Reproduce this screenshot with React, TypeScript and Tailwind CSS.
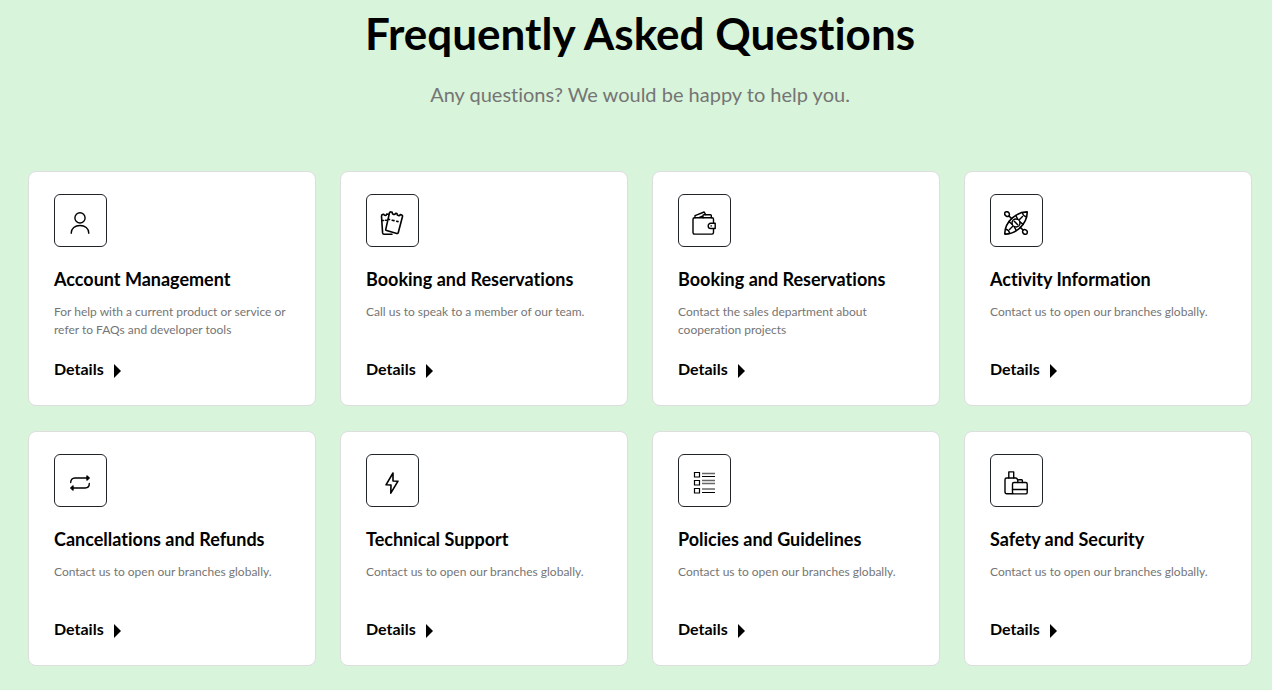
import type { ReactNode } from "react";

type Topic = {
  title: string;
  text: string;
  icon: ReactNode;
};

function Icon({ children }: { children: ReactNode }) {
  return (
    <svg
      viewBox="0 0 24 24"
      className="size-6"
      fill="none"
      stroke="#000"
      strokeWidth="1.4"
      strokeLinecap="round"
      strokeLinejoin="round"
      aria-hidden="true"
    >
      {children}
    </svg>
  );
}

const personIcon = (
  <Icon>
    <circle cx="12" cy="6.9" r="5.1" />
    <path d="M3.2 22.2c0-4.7 3.8-7.7 8.8-7.7s8.8 3 8.8 7.7" />
  </Icon>
);

const ticketsIcon = (
  <Icon>
    <path
      d="M12 23.200H4c-.8 0-1.300-.5-1.400-1.300L1.500 5.300c0-.9.200-1.500.9-1.700l1.400-.3c.6 1.700 2.600 1.500 3-.3l1.700.2"
      strokeWidth="1.600"
    />
    <path d="M1.900 9.500h1.600M5.500 9.300h1" strokeWidth="1.600" />
    <path
      d="M10.800.9l1.400.4c-.3 2.200 2.500 3 3.400 1l1.400.3c-.2 2.200 2.400 2.800 3.500.9l1.200.5c.7.200 1 .8.800 1.500L18.300 21.500c-.2.800-.8 1.100-1.500.9L6.600 19.600c-.7-.2-1-.8-.8-1.500L9.500 1.800c.2-.7.600-1.100 1.300-.9z"
      strokeWidth="1.600"
    />
    <path d="M8.500 8.200l1 .3M12.200 9.200l1.800.4M16.700 10.300l1.300.3" strokeWidth="1.600" />
  </Icon>
);

const walletIcon = (
  <Icon>
    <rect x="1" y="6.800" width="20.500" height="16.300" rx="1.500" />
    <path d="M3 6.800V4.700L12.200 1l1.400 2.600" />
    <path d="M11 6.800V4.500c0-.5.3-.8.8-.8h6.700c.5 0 .8.300.8.800v2.300M7.500 6.500L11 5" />
    <path d="M23.200 12.300h-4.400a2.600 2.600 0 0 0 0 5.200h4.400z" fill="#fff" />
    <path d="M19 14.900h.4" />
  </Icon>
);

const kayakIcon = (
  <Icon>
    <path
      d="M23.200.9C17 .8 12 3.600 8 7.200 4 11 .700 16.300.8 23.100c6.200.1 11.200-2.700 15.200-6.300 4-3.800 7.300-9.100 7.200-15.900z"
      strokeWidth="1.600"
    />
    <circle cx="12" cy="12" r="4" strokeWidth="1.500" />
    <path d="M10.300 10.300l3.400 3.400" strokeWidth="1.500" />
    <path d="M11.800 4.600l1.800 3.300M5 10.600l3.100 2.700M19 13.400l-3.100-2.700M12.200 19.400l-1.800-3.300M18.500 2c.3 1.800 1.700 3.200 3.700 3.700M1.800 18.300c2 .4 3.400 1.900 3.700 3.700M5.500 18.500l3-3M15.500 8.500l3-3" />
    <path d="M5 5l2.800 2.800M16.200 16.200L19 19" strokeWidth="1.600" />
    <path
      d="M1.200 1.200C2.500.400 4.200.8 5 2c.5.900.6 1.900 0 3-1.100.6-2.100.5-3 0C.8 4.200.4 2.500 1.200 1.200zM22.800 22.800c-1.300.8-3 .4-3.800-.8-.5-.9-.6-1.900 0-3 1.100-.6 2.100-.5 3 0 1.200.8 1.600 2.500.8 3.800z"
      strokeWidth="1.500"
    />
  </Icon>
);

const repeatIcon = (
  <Icon>
    <path d="M2.700 11.500c0-2.500 1.500-4.500 4.200-4.500H19" />
    <path d="M21.300 12.500c0 2.500-1.500 4.500-4.200 4.500H5" />
    <path d="M19 5l2.200 2L19 9zM5 15l-2.200 2L5 19z" fill="#000" />
  </Icon>
);

const boltIcon = (
  <Icon>
    <path d="M13 2L6 13.800l5 .2-.2 8.200 7.200-12-5-.2z" strokeWidth="1.600" />
  </Icon>
);

const listIcon = (
  <Icon>
    <path
      d="M2.500 1.500h5v4.500h-5zM2.500 9.500h5v4.500h-5zM2.500 17.500h5v4.500h-5z"
      strokeWidth="1.200"
      strokeLinejoin="miter"
    />
    <path d="M10 2.500h13M10 9.500h13M10 12.500h13M10 18h13" stroke="#666" strokeLinecap="butt" />
    <path d="M10 5.500h13M10 21.500h13" strokeWidth="1" strokeLinecap="butt" />
  </Icon>
);

const luggageIcon = (
  <Icon>
    <path d="M8.500 22.700H2.700c-1 0-1.700-.7-1.700-1.700V8.700C1 7.700 1.700 7 2.700 7h9c1 0 1.700.7 1.700 1.700" />
    <path d="M4.800 7V.9h4.900V7" />
    <rect x="8.500" y="11.500" width="14.700" height="11.400" rx="1.500" />
    <path d="M13.800 11.500V9.600c0-.5.300-.8.800-.8h3c.5 0 .8.300.8.800v1.900M8.500 18.500h14.700" />
  </Icon>
);

const branches = "Contact us to open our branches globally.";

const topics: Topic[] = [
  {
    title: "Account Management",
    text: "For help with a current product or service or refer to FAQs and developer tools",
    icon: personIcon,
  },
  {
    title: "Booking and Reservations",
    text: "Call us to speak to a member of our team.",
    icon: ticketsIcon,
  },
  {
    title: "Booking and Reservations",
    text: "Contact the sales department about cooperation projects",
    icon: walletIcon,
  },
  { title: "Activity Information", text: branches, icon: kayakIcon },
  { title: "Cancellations and Refunds", text: branches, icon: repeatIcon },
  { title: "Technical Support", text: branches, icon: boltIcon },
  { title: "Policies and Guidelines", text: branches, icon: listIcon },
  { title: "Safety and Security", text: branches, icon: luggageIcon },
];

function TopicCard({ title, text, icon }: Topic) {
  return (
    <article className="flex flex-col items-start rounded-lg border border-[#dedede] bg-white pt-[22px] pr-[23px] pb-6 pl-[25px]">
      <div className="size-[53px] rounded-md border border-[#212529] pt-4 pl-[13px]">{icon}</div>
      <h2 className="mt-5 text-[18px] leading-6 font-bold text-black">{title}</h2>
      <p className="mt-3 min-h-9 text-[12px] leading-[18px] text-[#757575]">{text}</p>
      <a
        href="#details"
        className="mt-[18px] flex items-center gap-2.5 text-[16px] leading-6 font-bold text-black"
      >
        Details
        <svg viewBox="0 0 7 14" className="mt-1 h-3.5 w-[7px]" aria-hidden="true">
          <path d="M0 0l7 7-7 7z" />
        </svg>
      </a>
    </article>
  );
}

export default function App() {
  return (
    <main className="min-h-screen bg-[#d8f4da] pt-[3px] pr-5 pb-6 pl-7 font-['Lato','Open_Sans',sans-serif] [font-variant-ligatures:none]">
      <header className="text-center">
        <h1 className="text-[44px] leading-[60px] font-bold text-black">
          Frequently Asked Questions
        </h1>
        <p className="mt-4 text-[20px] leading-[30px] text-[#757575]">
          Any questions? We would be happy to help you.
        </p>
      </header>
      <section className="mt-[62px] grid grid-cols-1 gap-x-6 gap-y-[25px] sm:grid-cols-2 lg:grid-cols-4">
        {topics.map((topic, index) => (
          <TopicCard key={index} {...topic} />
        ))}
      </section>
    </main>
  );
}
